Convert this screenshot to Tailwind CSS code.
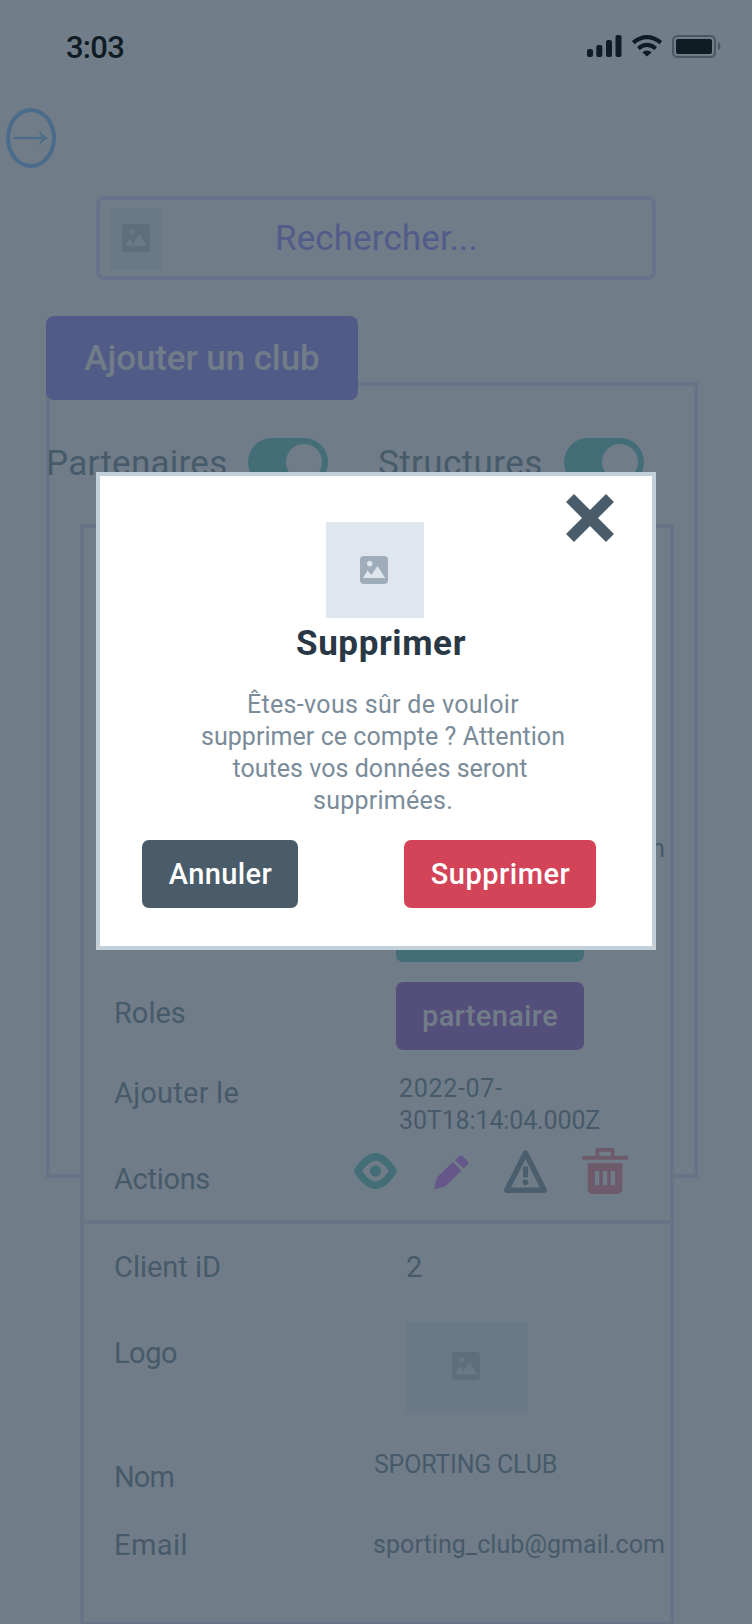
<!DOCTYPE html>
<html lang="fr">
<head>
<meta charset="utf-8">
<title>Clubs</title>
<script src="https://cdn.jsdelivr.net/npm/@tailwindcss/browser@4"></script>
</head>
<body class="relative h-[1624px] w-[752px] overflow-hidden bg-[#707d88] font-['Roboto',sans-serif] whitespace-nowrap text-[#475a69]">

<svg class="hidden">
  <symbol id="picture" viewBox="0 0 28 28">
    <path fill="currentColor" fill-rule="evenodd" d="M4 0H24a4 4 0 0 1 4 4V24a4 4 0 0 1-4 4H4a4 4 0 0 1-4-4V4a4 4 0 0 1 4-4ZM9.700 4.900a2.800 2.800 0 1 0 .01 0ZM3 22H25.200L17.500 10L11.500 19L7.500 14.500Z"/>
  </symbol>
</svg>

<!-- Status bar -->
<header class="flex h-[88px] items-start bg-[#717e89] text-[#101c24]">
  <div class="mt-7 ml-[66px] w-[521px] text-[31px] leading-10 font-medium tracking-[-0.76px]">3:03</div>
  <svg class="mt-[35px] h-[23px] w-[135px]" viewBox="0 0 135 23" fill="currentColor">
    <rect x="0" y="14" width="6" height="8" rx="2"/>
    <rect x="9.300" y="10" width="6" height="12" rx="2"/>
    <rect x="19" y="5" width="6" height="17" rx="2"/>
    <rect x="28.500" y="0" width="6" height="22" rx="2"/>
    <g fill="none" stroke="currentColor" stroke-width="4">
      <path d="M46.200 7.600Q60 -3.400 73.800 7.600"/>
      <path d="M51.300 13.500Q60 6.300 68.700 13.500"/>
    </g>
    <path d="M55.300 17.200Q60 13.600 64.700 17.200L60 21.500Z"/>
    <rect x="86" y="1" width="42" height="21" rx="4.500" fill="none" stroke="#4b5863" stroke-width="2"/>
    <rect x="89" y="4" width="36" height="15" rx="2"/>
    <path d="M131 7Q133.500 8 133.500 11T131 15Z" fill="#4b5863"/>
  </svg>
</header>

<!-- Open menu -->
<button class="mt-5 ml-1.5 flex h-[60px] w-[50px] items-center justify-center rounded-[50%] border-4 border-[#4b6b8a] text-[#4b6b8a]">
  <svg class="-ml-px h-[14px] w-[34px] shrink-0" viewBox="0 0 34 14"><path d="M0 7H30" stroke="currentColor" stroke-width="2.200"/><path d="M25 .3H26.200Q29 5 34 7Q29 9 26.200 13.700H25Q26 10 28.800 7Q26 4 25 .3Z" fill="currentColor"/></svg>
</button>

<!-- Search -->
<div class="mt-7 ml-24 flex h-[84px] w-[560px] items-start rounded-lg border-4 border-[#67728c]">
  <div class="mt-2 ml-2.5 h-[62px] w-[52px] rounded-xs bg-[#697985] px-3 py-4 text-[#5d6f7d]"><svg class="size-7"><use href="#picture"/></svg></div>
  <div class="mt-[19px] ml-[113px] text-[35px] leading-10 tracking-[0.1px] text-[#515c8a]">Rechercher...</div>
</div>

<button class="relative z-10 mt-9 ml-[46px] flex h-[84px] w-[312px] items-center justify-center rounded-lg bg-[#515b88] text-[35px] leading-10 font-medium tracking-[-0.1px] text-[#707d88]"><span class="relative top-px">Ajouter un club</span></button>

<main class="-mt-[18px] ml-[46px] h-[796px] w-[652px] border-4 border-[#667486]">
  <div class="mt-[52px] -ml-[4px] flex h-12 text-[35px] leading-[52px] tracking-[0.25px]">
    <div class="w-[202px]">Partenaires</div>
    <div class="flex h-12 w-20 justify-end rounded-full bg-[#436e78] p-1.5"><div class="size-9 rounded-full bg-[#707d88]"></div></div>
    <div class="ml-[50px] w-[186px] tracking-[0.4px]">Structures</div>
    <div class="flex h-12 w-20 justify-end rounded-full bg-[#436e78] p-1.5"><div class="size-9 rounded-full bg-[#707d88]"></div></div>
  </div>

  <!-- Client cards -->
  <div class="mt-[38px] ml-[30px] h-[1102px] w-[594px] border-4 border-[#667486] bg-[#707d88] text-[29px] leading-10">
    <section class="flex h-[696px] flex-col border-b-4 border-[#667486] pl-[30px]">
      <div class="mt-[305px] flex h-8 w-[551px] justify-end text-[25px] leading-8">m</div>
      <div class="mt-[29px] ml-[282px] h-[68px] w-[188px] rounded-[7px] bg-[#436e78]"></div>
      <div class="mt-5 flex h-[68px]">
        <div class="mt-[11px] w-[282px]">Roles</div>
        <div class="flex w-[188px] items-center justify-center rounded-[7px] bg-[#544e7b] font-medium tracking-[0.32px] text-[#707d88]">partenaire</div>
      </div>
      <div class="mt-[22px] flex h-16">
        <div class="mt-px w-[285px] tracking-[0.23px]">Ajouter le</div>
        <div class="mt-px text-[25px] leading-8"><div class="tracking-[0.7px]">2022-07-</div><div class="tracking-[-0.12px]">30T18:14:04.000Z</div></div>
      </div>
      <div class="mt-3 flex h-[46px] items-start">
        <div class="mt-[11px] w-[240px] tracking-[-0.31px]">Actions</div>
        <svg class="mt-[5px] h-9 w-[43px] text-[#436e78]" viewBox="0 0 43 36"><path fill="currentColor" fill-rule="evenodd" d="M.7 16Q11 0 21.500 0T42.300 16Q43.300 18 42.300 20Q32 36 21.500 36T.7 20Q-.3 18 .7 16ZM8 18Q15.500 28.500 21.500 28.500T35 18Q27.500 7.500 21.500 7.500T8 18Z"/><circle cx="21.500" cy="18" r="5.600" fill="currentColor"/></svg>
        <svg class="mt-[7px] ml-[37px] h-[35px] w-[35px] text-[#66578a]" viewBox="0 0 35 35" fill="currentColor"><path d="M0 34.500L3 22.300L19 6.900L27.500 15.600L11.500 31.300Z"/><path d="M21 5L25.200 1.200Q27 -.3 28.900 1.400L33.500 6Q35 7.600 33.600 9.400L29.600 13.500Z"/></svg>
        <svg class="mt-0.5 ml-[35px] h-[43px] w-[43px] text-[#4b5e6d]" viewBox="0 0 43 43" fill="currentColor"><path d="M21.500 3L2.700 40.300H40.300Z" fill="none" stroke="currentColor" stroke-width="5.400" stroke-linejoin="round"/><rect x="19" y="16.500" width="5" height="11"/><circle cx="21.500" cy="32.300" r="2.900"/></svg>
        <svg class="ml-[35px] size-[46px] text-[#6d5b6c]" viewBox="0 0 46 46" fill="currentColor"><path d="M15.300 9V1.900H30.700V9" fill="none" stroke="currentColor" stroke-width="3.800" stroke-linejoin="round"/><rect y="7.700" width="46" height="4" rx="1.500"/><path fill-rule="evenodd" d="M5.700 15.300H40.300V40.500Q40.300 46 34.800 46H11.200Q5.700 46 5.700 40.500ZM13 23V37H17.300V23ZM20.900 23V37H25.200V23ZM28.700 23V37H33V23Z"/></svg>
      </div>
    </section>
    <section class="flex flex-col pl-[30px]">
      <div class="mt-[23px] flex h-10"><div class="w-[292px]">Client iD</div><div>2</div></div>
      <div class="mt-[35px] flex h-[90px]">
        <div class="mt-[11px] w-[292px] tracking-[-0.5px]">Logo</div>
        <div class="w-[122px] bg-[#697985] pt-[30px] pl-[46px] text-[#5d6f7d]"><svg class="size-7"><use href="#picture"/></svg></div>
      </div>
      <div class="mt-9 flex h-[49px]">
        <div class="mt-[9px] w-[260px] tracking-[-0.89px]">Nom</div>
        <div class="text-[25px] leading-[33px] tracking-[-0.22px]">SPORTING CLUB</div>
      </div>
      <div class="mt-7 flex h-10">
        <div class="w-[259px] tracking-[0.44px]">Email</div>
        <div class="mt-[3px] text-[25px] leading-[33px] tracking-[0.06px]">sporting_club@gmail.com</div>
      </div>
    </section>
  </div>
</main>

<!-- Delete confirmation -->
<div class="absolute top-[472px] left-24 z-20 h-[478px] w-[560px] border-4 border-[#c3cfd9] bg-white">
  <button class="absolute top-[18px] right-[38px] text-[#4a5b69]"><svg class="size-12" viewBox="0 0 48 48"><path d="M4 4L44 44M44 4L4 44" stroke="currentColor" stroke-width="11.300"/></svg></button>
  <div class="mt-[46px] ml-[226px] h-24 w-[98px] bg-[#dfe6ee] pt-[34px] pl-[34px] text-[#9eadb9]"><svg class="size-7"><use href="#picture"/></svg></div>
  <h2 class="mt-1.5 ml-[196px] text-[35px] leading-10 font-bold tracking-[0.6px] text-[#2a3845]">Supprimer</h2>
  <div class="mt-[25px] ml-[7px] w-[552px] text-center text-[25px] leading-8 text-[#7a8b99]">
    <div class="tracking-[0.32px]">Êtes-vous sûr de vouloir</div>
    <div class="tracking-[0.05px]">supprimer ce compte ? Attention</div>
    <div class="-ml-1.5 tracking-[0.04px]">toutes vos données seront</div>
    <div class="tracking-[0.25px]">supprimées.</div>
  </div>
  <div class="mt-[23px] ml-[42px] flex h-[68px] gap-[106px] text-[29px] leading-10 font-medium text-white">
    <button class="w-[156px] rounded-[7px] bg-[#4a5b69] pl-px tracking-[0.4px]">Annuler</button>
    <button class="w-48 rounded-[7px] bg-[#d34459] pl-px tracking-[0.5px]">Supprimer</button>
  </div>
</div>
</body>
</html>
